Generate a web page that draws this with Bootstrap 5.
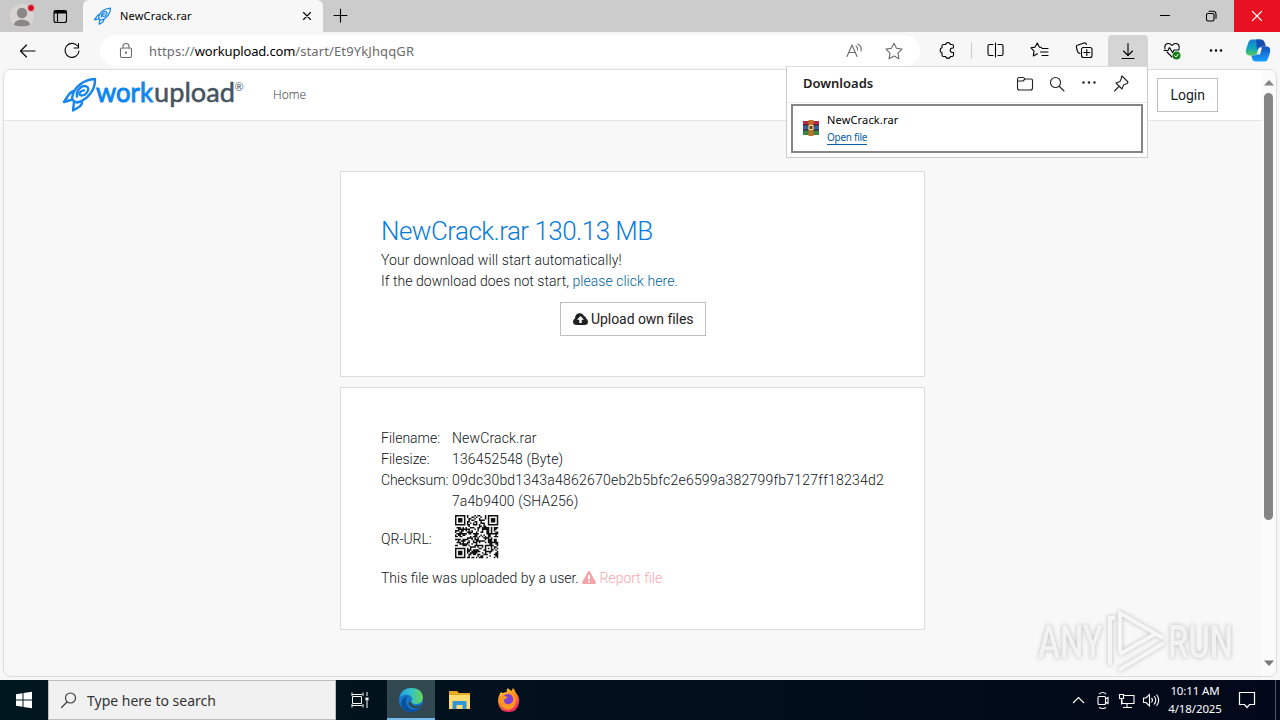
<!DOCTYPE html>
<html lang="en">
<head>
<meta charset="utf-8">
<title>NewCrack.rar</title>
<link href="https://cdn.jsdelivr.net/npm/bootstrap@5.3.0/dist/css/bootstrap.min.css" rel="stylesheet">
<style>
body{width:1280px;height:720px;overflow:hidden;background:#f7f7f7;font-family:"Noto Sans","Open Sans",sans-serif;font-size:12px;color:#000}
svg{display:block;flex:none;overflow:visible}
.ln{fill:none;stroke:currentColor;stroke-width:1.1;stroke-linecap:round;stroke-linejoin:round}
.tabstrip{height:32px;background:#ccc}
.profile{width:83px;background:#c9c9c9;border-bottom-right-radius:5px}
.tab{width:240px;background:#f7f7f7;border-radius:6px 6px 0 0;padding:0 7px 0 11px}
.tab-title{margin-left:9px;font-size:11px;line-height:16px;letter-spacing:.18px}
.winbtn{width:46px}
.winclose{background:#e81123;color:#fff}
.toolbar{height:37px;background:#f7f7f7}
.address{width:820px;height:31px;background:#fff;border-radius:16px;margin-left:10px;color:#6b6b6b;padding-left:19px}
.url{font-size:13px;line-height:18px;letter-spacing:.12px}
.url b{font-weight:400;color:#000;letter-spacing:-.16px}
.tool{position:relative;height:31px}
.tool.active{width:40px;background:#d5d5d5;border-radius:4px 4px 0 0}
.viewport{width:1274px;height:608px;margin-left:3px;border:1px solid #dcdcdc;border-radius:8px;background:#f8f8f8}
.site{font-family:Roboto,sans-serif;font-size:14px;line-height:21px;color:#111518;font-weight:300}
.sitebar{height:51px;background:#fff;border-bottom:1px solid #e4e4e4;padding-left:59px}
.brandmark{width:181px;height:34px;margin-top:-2px}
.home{margin:-2px 0 0 29px;font-family:"Noto Sans",sans-serif;font-size:12px;color:#444}
.plainbtn{height:34px;border:1px solid #bfbfbf;background:#fff;border-radius:0;padding:0 12px;font-size:14px;line-height:32px;color:#222;font-weight:400}
.plainbtn.own{letter-spacing:-.05px}
.panel{width:585px;margin-left:336px;border:1px solid #ddd;background:#fff;padding:40px}
.panel h1{font-size:26px;line-height:30px;font-weight:300;color:#087bdb;letter-spacing:-.53px;margin:4px 0 4px}
.panel a{color:#005f9c;text-decoration:none}
.panel a.report{color:#f8a6ab}
.facts{display:grid;grid-template-columns:71px 1fr}
.scrolls{width:15px;background:#fbfbfb}
.thumb{width:9px;height:427px;border-radius:5px;background:#858585}
.flyout{position:absolute;left:786px;top:66px;width:362px;height:92px;background:#fff;border:1px solid #ccc;border-top-color:#ddd}
.fly-head{height:36px;padding:0 18px 2px 16px;border-bottom:1px solid #ececec;color:#222}
.fly-item{height:49px;margin:1px 4px;border:2px solid #858585;padding-left:10px}
.fly-item .open{font-size:10px;line-height:13px;letter-spacing:-.28px;color:#0c5da5;border-bottom:1px solid #0c5da5}
.watermark{position:absolute;left:1036px;top:606px;filter:drop-shadow(0 0 2px #bbb)}
.taskbar{height:40px;margin-top:3px;background:linear-gradient(90deg,#01171f,#020f1c 50%,#020819);color:#fff}
.search{width:288px;background:#f1f1f1;border:1px solid #bcbcbc;color:#333;padding-left:12px}
.hint{margin-left:10px;font-size:14px}
.clock{width:60px;font-size:11.5px;line-height:18px;letter-spacing:-.12px}
</style>
</head>
<body class="d-flex flex-column">
<header class="tabstrip d-flex flex-none">
  <div class="profile d-flex align-items-center">
    <svg width="82" height="32"><circle cx="22" cy="16" r="12" fill="#d7d4d1"/><circle cx="22" cy="13" r="5.2" fill="#8b8784"/><path d="M14 25c0-7 16-7 16 0q-8 3-16 0" fill="#8b8784"/><circle cx="31" cy="8" r="3.4" fill="#d90b1e" stroke="#ddd" stroke-width=".6"/><rect x="54" y="10.500" width="12.500" height="12" rx="2" class="ln"/><path d="M54 12h12.500" stroke="#000" stroke-width="3"/><path d="M57.500 13v9" class="ln"/></svg>
  </div>
  <div class="tab d-flex align-items-center">
    <svg width="17" height="18" viewBox="0 0 33 34"><use href="#rocket"/></svg>
    <span class="tab-title">NewCrack.rar</span>
    <svg class="ms-auto me-1" width="10" height="10"><path d="M1.500 1.500l7 7m0-7l-7 7" class="ln"/></svg>
  </div>
  <svg class="ms-2" width="18" height="32"><path d="M3 15.500h13M9.500 9v13" class="ln"/></svg>
  <div class="ms-auto d-flex">
    <div class="winbtn d-flex align-items-center justify-content-center"><svg width="10" height="2"><path d="M0 .5h10" stroke="#000"/></svg></div>
    <div class="winbtn d-flex align-items-center justify-content-center"><svg width="12" height="12"><rect x="1.500" y="3.500" width="7.500" height="7.500" rx="1.500" class="ln"/><path d="M4 1.300h4q3 0 3 3v4" class="ln"/></svg></div>
    <div class="winbtn winclose d-flex align-items-center justify-content-center"><svg width="10" height="10"><path d="M.5.5l9 9m0-9l-9 9" class="ln"/></svg></div>
  </div>
</header>
<div class="toolbar d-flex align-items-center">
  <svg width="90" height="32" class="ln"><path d="M35 16H20.500m6-6l-6 6 6 6M77.500 11a7 7 0 1 0 1.500 5M78.500 8.500v4.500h-4.500"/></svg>
  <div class="address d-flex align-items-center">
    <svg width="14" height="18" class="ln"><rect x="1.500" y="6" width="11" height="9.500" rx="1.500"/><path d="M4 6V4q0-2.500 3-2.500T10 4v2"/><circle cx="7" cy="10.700" r=".6" fill="currentColor"/></svg>
    <span class="url ms-3">https://<b>workupload.com</b>/start/Et9YkJhqqGR</span>
    <svg class="ms-auto" width="75" height="30"><g class="ln"><path d="M2 20.500L7 9l5 11.500M4 16.500h6M11 10q2 1.500 1.500 4M13 8q4 2.500 3 7"/><path d="M49 7.200l2.500 5 5.500.9-4 4 .9 5.600-4.900-2.600-4.900 2.600.9-5.600-4-4 5.500-.9z"/></g></svg>
  </div>
  <svg class="tool" width="188" height="31"><g class="ln">
    <path transform="translate(-1)" d="M24.500 9.500h2a2.600 2.600 0 0 1 5 0h1.500q1.500 0 1.500 1.500v2h-1a2.200 2.200 0 0 0 0 4.500h1v2.500q0 1.500-1.500 1.500h-1.500a2.600 2.600 0 0 1-5 0h-2q-1.500 0-1.500-1.500v-2.200a2.600 2.600 0 0 1 0-5V11q0-1.500 1.500-1.500z"/>
    <path d="M51.500 8v15" stroke="#ccc"/>
    <path d="M73 9.500h-3.500q-1.500 0-1.500 1.500v8q0 1.500 1.500 1.500H73M78 9.500h3.500q1.500 0 1.500 1.500v8q0 1.500-1.500 1.500H78M75.500 8v14"/>
    <path transform="translate(.5)" d="M121 12.500l-2.200-.4-2-4.200-2.200 4.200-4.100.7 3 3.300-.7 4.800 4-2.200M121.500 13.500h6M120 17h7.500M121.500 20.500h6"/>
    <rect x="161.500" y="12.500" width="10.500" height="10" rx="2"/><path d="M166.800 14.500v6m-3-3h6M160 18.500q-2-.5-2.500-2l-1-4q-.5-2 1.500-2.500l6-2q2-.5 2.500 1.500"/>
  </g></svg>
  <div class="tool active d-flex align-items-center justify-content-center"><svg width="16" height="18" class="ln"><path d="M8 1.500v12M3.500 9L8 13.500 12.500 9M2 16.500h12"/></svg></div>
  <svg width="132" height="32"><g class="ln"><path d="M24 22l-5-5M17 14q-1-5 3-5.500 2.300-.2 4 2 1.700-2.200 4-2 4 .5 3 5.500M16 15.500h4l1.500-3 3 5 1.500-2.500h5"/></g><circle cx="28.500" cy="20.500" r="4" fill="#168216"/><path d="M26.500 20.500l1.500 1.500 2.500-3" fill="none" stroke="#fff"/><g fill="#000"><circle cx="63" cy="15.500" r="1.200"/><circle cx="68" cy="15.500" r="1.200"/><circle cx="73" cy="15.500" r="1.200"/></g>
    <defs><linearGradient id="cp1" x2="0" y2="1"><stop stop-color="#167bd5"/><stop offset=".55" stop-color="#10a8bb"/><stop offset="1" stop-color="#55c957"/></linearGradient><linearGradient id="cp2" x2="0" y2="1"><stop stop-color="#174fba"/><stop offset="1" stop-color="#1aa0ff"/></linearGradient></defs>
    <path d="M104 4.500h9l-4 14q-1 2-3 2h-5q-4-1-3-6l2-6q1-4 4-4z" fill="url(#cp1)"/><path d="M108 4.500h5q3 0 4 4l1 3h-4q-2 0-3 2l-2 1z" fill="#164fb4"/><path d="M117 26.500h-9q-4 0-4-4l-1-2h3q3 0 4-3l2-6h7q4 0 3 6l-2 6q-1 3-3 3z" fill="url(#cp2)"/><path d="M111 12.500h3l-2 7h-3z" fill="#f7f7f7"/>
  </svg>
</div>
<div class="viewport d-flex overflow-hidden">
  <main class="site flex-grow-1">
    <nav class="sitebar d-flex align-items-center">
      <svg class="brandmark" viewBox="0 0 181 34">
        <defs><g id="rocket" fill="none" stroke="#1686ea" stroke-width="2.400" stroke-linejoin="round" stroke-linecap="round"><path d="M11 24L9 21q1-9 8-14 6-5 15-5.500.2 9-5 15-4.500 6-12.500 8.500L11 24M11.500 13.500q-4 .5-7 5.500l-3.500 5.500 7-2M19 24q.5 3-3 5.500l-6 3.500 1-8.500"/><path d="M14 19q-1-5 3.500-9 3-2.500 6-1t1 5q-2 4-6 4-3-.5-1.500-3 2-2.500 4-2"/></g></defs>
        <use href="#rocket" y=".5"/>
        <g font-family="Lato,sans-serif" font-size="26.500" stroke-width=".5" font-weight="400"><text x="33" y="25" fill="#0d86f2" stroke="#0d86f2" stroke-width=".9" textLength="57" lengthAdjust="spacingAndGlyphs">work</text>
        <text x="91" y="25" fill="#46545f" stroke="#46545f" textLength="81" lengthAdjust="spacingAndGlyphs">upload</text></g>
        <text x="171.500" y="14" font-family="Lato,sans-serif" font-size="11" fill="#46545f" font-weight="400">®</text>
      </svg>
      <span class="home">Home</span>
      <button class="plainbtn ms-auto" style="margin-right:43px">Login</button>
    </nav>
    <section class="panel" style="margin-top:50px;height:206px">
      <h1>NewCrack.rar 130.13 MB</h1>
      <div style="letter-spacing:.11px">Your download will start automatically!</div>
      <div style="letter-spacing:.05px">If the download does not start, <a href="#">please click here.</a></div>
      <div class="text-center" style="margin:10px -1px 0 0"><button class="plainbtn own"><svg class="d-inline-block" width="15" height="12" viewBox="0 0 15 12" style="vertical-align:-1px"><path d="M3.700 12Q0 12 0 8.500q0-2 2-3Q2 1 6 .3q4-.3 5 3 2-.3 2 2 2 1 2 3.500 0 3.200-3.500 3.200z" fill="#222"/><path d="M7.500 3L4 6.700h2.300V10h2.400V6.700H11z" fill="#fff"/></svg> Upload own files</button></div>
    </section>
    <section class="panel" style="margin-top:10px;height:243px;padding-right:36px">
      <div class="facts">
        <span>Filename:</span><span style="letter-spacing:.15px">NewCrack.rar</span>
        <span>Filesize:</span><span style="letter-spacing:.12px">136452548 (Byte)</span>
        <span style="letter-spacing:-.1px">Checksum:</span><span><span style="letter-spacing:.22px">09dc30bd1343a4862670eb2b5bfc2e6599a382799fb7127ff18234d2</span><br><span style="letter-spacing:.1px">7a4b9400 (SHA256)</span></span>
        <span style="padding-top:17px">QR-URL:</span><svg id="qr" width="50" height="50" viewBox="-2 -2 33.500 33.500"></svg>
      </div>
      <div style="margin-top:6px">This file was uploaded by a user. <a class="report" href="#"><svg class="d-inline-block" width="14" height="13" viewBox="0 0 14 13" style="vertical-align:-1px"><path d="M7 0q.7 0 1 .6l5.800 10.700Q14.200 13 13 13H1Q-.2 13 .2 11.300L6 .6Q6.300 0 7 0z" fill="#f4a3a8"/><path d="M7 4v4.500M7 9.700v1.800" stroke="#fff" stroke-width="1.800"/></svg> Report file</a></div>
    </section>
  </main>
  <aside class="scrolls d-flex flex-column align-items-center">
    <svg width="10" height="6" style="margin:10px 0 7px"><path d="M0 5.500L5 0l5 5.500z" fill="#858585"/></svg>
    <div class="thumb"></div>
    <svg class="mt-auto" width="10" height="6" style="margin-bottom:10px"><path d="M0 .5L5 6l5-5.500z" fill="#777"/></svg>
  </aside>
</div>
<footer class="taskbar d-flex flex-shrink-0">
  <svg width="48" height="40"><path d="M16 14.200l6.500-1v6.300H16zM23.500 13l8.500-1.200v7.700h-8.500zM16 20.500h6.500v6.300l-6.500-1zM23.500 20.500H32v7.700L23.500 27z" fill="#fff"/></svg>
  <div class="search d-flex align-items-center"><svg width="16" height="16" class="ln"><circle cx="9.500" cy="6" r="5"/><path d="M6 10l-5.500 5.500"/></svg><span class="hint">Type here to search</span></div>
  <svg width="51" height="40"><g fill="none" stroke="#fff"><path d="M16 16v-3.500M27 16v-3.500M16 14.500h10M16.500 16.500h9v7h-9zM16 27.500V24M27 27.500V24M16 25.500h10M31 12v4M31 21v7"/></g><path d="M29.500 17.500h3v3h-3z" fill="#fff"/></svg>
  <svg width="48" height="40"><defs><linearGradient id="eg" x1="0" x2="1"><stop stop-color="#1b9de2"/><stop offset=".5" stop-color="#35c1c8"/><stop offset="1" stop-color="#65d852"/></linearGradient><linearGradient id="ff" x2=".4" y2="1"><stop stop-color="#ffdf3c"/><stop offset=".5" stop-color="#ff8a22"/><stop offset="1" stop-color="#f22b62"/></linearGradient></defs><path d="M0 0h48v40H0z" fill="#324850"/><path d="M0 38h48v2H0z" fill="#76b9ed"/><circle cx="24" cy="20" r="12" fill="#1478c7"/><path d="M12 19Q14 8 24 8q11 0 12 9 0 6-6 7-5 0-6-2 2-2 1-4-3-5-8-3-4 1-5 4z" fill="url(#eg)"/><path d="M20 16q-3 7 2 12 5 4 12-2-4 7-12 6-7-2-8-8 1-6 6-8z" fill="#0b4f9f"/><path d="M24 22q1 4 5 4 4 0 6-2l-2 3q-6 3-10-1-2-2-1-4 1-1 2 0z" fill="#324850"/></svg>
  <svg width="50" height="40"><path d="M14 11h8l2 2h11v16H14z" fill="#e9a621"/><path d="M14 15h21v14H14z" fill="#ffdb70"/><path d="M17.500 29v-7q0-1 1-1h12q1 0 1 1v7h-4v-4h-6v4z" fill="#3195d8"/></svg>
  <svg width="49" height="40"><path d="M16 12q1 1 2 1 2-1 4-1-1-2 1-4 1 2 4 3 0-2 1-3 2 2 3 5 4 4 3 10-2 9-10 9-10 0-11-10 0-6 3-10z" fill="url(#ff)"/><circle cx="23" cy="20" r="6" fill="#8140d4"/><path d="M14 17q5-3 9 1-4 0-4 3 1 4 6 3 4-2 3-6-1-4-4-5 6 0 7 7 0 9-8 10-8-1-9-13z" fill="#ff9825"/></svg>
  <div class="ms-auto d-flex align-items-center">
    <svg width="96" height="40"><g fill="none" stroke="#fff" stroke-width="1.100"><path d="M8 23l5.500-5.500L19 23"/><path d="M34 16.500h5.500q1 0 1 1v6q0 1-1 1H34q-1 0-1-1v-6q0-1 1-1zM40.500 19l2.500-1.500v6L40.500 22M34 14q4-3 7 0M34 27.500q4 2 7 0"/><path d="M59 15.500h10v8h-12v-4M62 23.500v4M58 27.500h9M54.500 14.500h4v4h-4zM56.500 18.500v6"/><path d="M78.500 18h2.500l3.500-3.500v11.500L81 22.500h-2.500zM86.500 18q2 2 0 4.500M89 16q3.500 4 0 8.500M91.500 14.500q4.500 5.500 0 11.500"/></g></svg>
    <div class="clock text-center ms-1"><div>10:11 AM</div><div class="date">4/18/2025</div></div>
    <svg width="55" height="40"><path d="M14.500 12.500h15v12h-5L22 27.500l-2.500-3h-5z" fill="none" stroke="#fff" stroke-width="1.200"/><path d="M50.500 0v40" stroke="#4e5964"/></svg>
  </div>
</footer>
<div class="flyout">
  <div class="fly-head d-flex align-items-center"><span class="fw-semibold dl" style="font-size:13px">Downloads</span>
    <svg class="ms-auto" width="113" height="20"><g class="ln" transform="translate(0 -.5)"><path d="M3.500 4H7q1 0 2 1.500h6q1.500 0 1.500 1.500v7.500q0 2-2 2h-11q-2 0-2-2V6q0-2 2-2zM2 7.500h5l2-2"/><circle cx="39.500" cy="9" r="5"/><path d="M43.500 13l4.500 4.500"/><path d="M106 2.500l5.500 5.500q1 1-.5 2l-3.500 1.500-1.500 4-6-6 4-1.500 1.500-3.500q-.5-1.500.5-2zM103 13L98.500 17.500"/></g><g fill="#222"><circle cx="67.500" cy="8.500" r="1.200"/><circle cx="73" cy="8.500" r="1.200"/><circle cx="78.500" cy="8.500" r="1.200"/></g></svg>
  </div>
  <div class="fly-item d-flex align-items-center">
    <svg width="16" height="16" style="margin-top:-2px"><path d="M0 1h16v4H0z" fill="#b52a45"/><path d="M0 5h16v5H0z" fill="#405d9f"/><path d="M0 10h16v5H0z" fill="#388449"/><path d="M5.500 0h5v16h-5z" fill="#bd7428"/><path d="M5.500 5h5v5h-5z" fill="#ffe09a"/><path d="M6.500 6h3v3h-3z" fill="#694220"/><path d="M0 5h5.500M0 10h5.500M10.500 5H16M10.500 10H16" stroke="#222"/></svg>
    <div class="ms-2"><div class="fname" style="font-size:11px;line-height:16px;letter-spacing:.16px">NewCrack.rar</div><span class="open d-inline-block">Open file</span></div>
  </div>
</div>
<svg class="watermark" width="200" height="68"><g fill="#f3f3f3" font-family="Roboto,sans-serif" font-weight="500" font-size="46"><text x="2" y="52" textLength="65" lengthAdjust="spacingAndGlyphs">ANY</text><text x="132" y="52" textLength="65" lengthAdjust="spacingAndGlyphs">RUN</text></g><g fill="none" stroke="#f6f6f6" stroke-width="4"><path d="M74 59V12h5M84 47V7l43 25M84 48l35-20M83 64l45-27"/></g></svg>
<script src="https://cdn.jsdelivr.net/npm/bootstrap@5.3.0/dist/js/bootstrap.bundle.min.js"></script>
<script>
// 29-module code with three finder squares and a small alignment square
const N=29;let d='',seed=71;
const ring=(x,y,cx,cy)=>Math.max(Math.abs(x-cx),Math.abs(y-cy));
for(let y=0;y<N;y++)for(let x=0;x<N;x++){
  seed=(seed*1103515245+12345)%2147483648;
  let on=(seed>>>16)%2;
  for(const [cx,cy] of [[3,3],[25,3],[3,25]]){const r=ring(x,y,cx,cy);if(r<=4)on=r!==2&&r!==4}
  const a=ring(x,y,22,22);if(a<=2)on=a!==1;
  if(on)d+=`M${x} ${y}h1v1h-1z`;
}
document.getElementById('qr').innerHTML=`<path d="${d}" fill="#111"/>`;
</script>
</body>
</html>
